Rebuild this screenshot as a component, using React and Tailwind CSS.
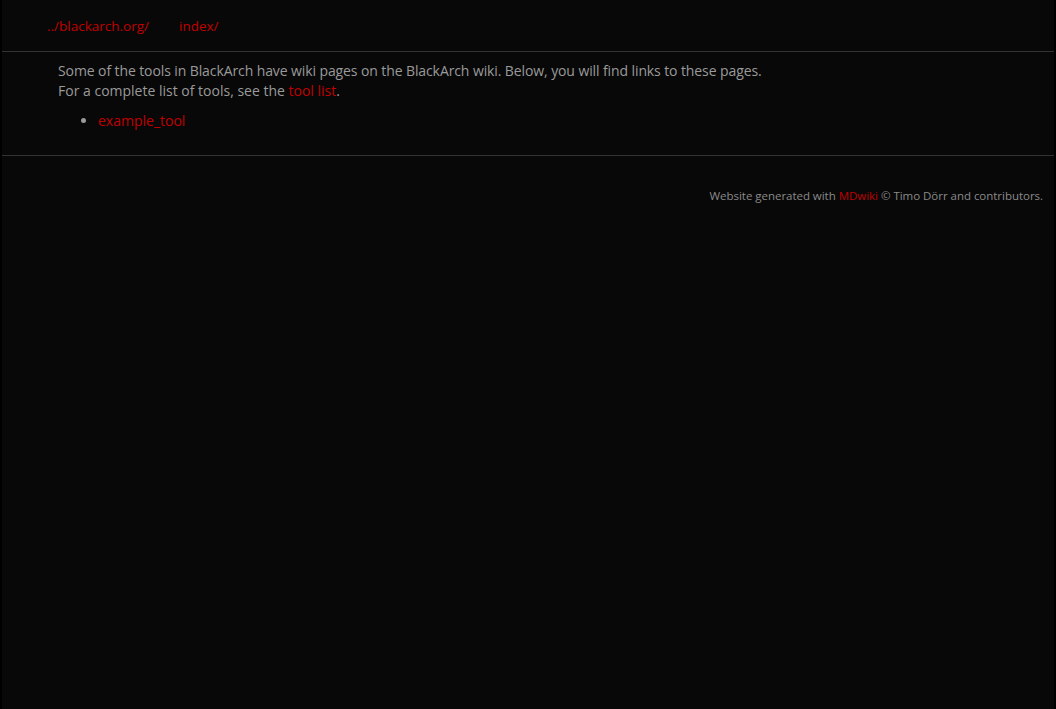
import React from "react";

const App = () => {
  return (
    <div className="min-h-[709px] bg-black font-['Open_Sans',sans-serif] px-[2px]">
      <div className="min-h-[709px] bg-[#080808]">
        <nav className="h-[52px] border-b border-[#333] flex items-center pl-[45px] gap-[30px] text-[13.5px] pt-[1px]">
          <a className="text-[#c00000]">../blackarch.org/</a>
          <a className="text-[#c00000]">index/</a>
        </nav>

        <div className="border-b border-[#333] pl-[56px] pt-[9px] pb-[24px] text-[14px] leading-[20px] text-[#9a9a9a]">
          <p className="tracking-[-0.1px]">
            Some of the tools in BlackArch have wiki pages on the BlackArch wiki. Below, you will find
            links to these pages.
          </p>
          <p>
            For a complete list of tools, see the <a className="text-[#c00000]">tool list</a>.
          </p>
          <ul className="list-disc pl-[40px] mt-[10px] marker:text-[#9a9a9a]">
            <li>
              <a className="text-[#c00000]">example_tool</a>
            </li>
          </ul>
        </div>

        <footer className="text-right pr-[11px] pt-[32px] text-[11.5px] leading-[16px] tracking-[-0.03px] text-[#8a8a8a]">
          Website generated with <a className="text-[#c00000]">MDwiki</a> © Timo Dörr and contributors.
        </footer>
      </div>
    </div>
  );
};

export default App;
